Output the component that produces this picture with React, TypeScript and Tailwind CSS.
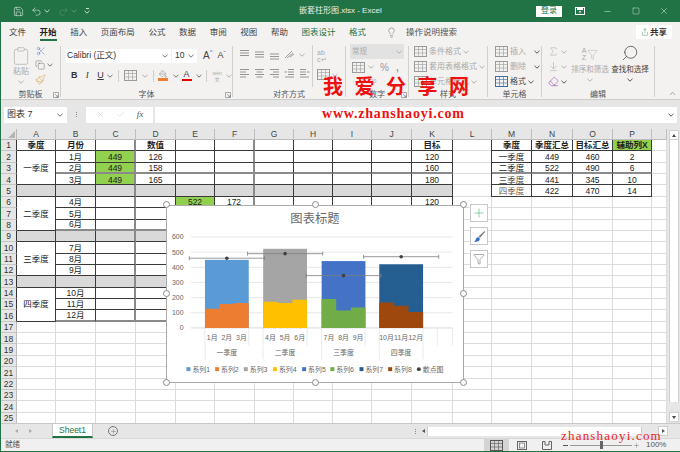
import React from "react";
import { X, Check, Minus, Square, Plus, Filter, Paintbrush, Search, Lightbulb, Share, Scissors, Copy, Clipboard, Save, Undo2, Redo2, Eraser, ChevronUp, Sigma, ArrowDownToLine, PaintBucket } from "lucide-react";

const FONT = "[font-family:'Liberation_Sans','Noto_Sans_CJK_SC',sans-serif]";

const Caret = ({ c = "#666" }: { c?: string }) => (
  <svg width="6" height="4" viewBox="0 0 6 4" className="shrink-0"><path d="M0.5 0.8 L3 3.2 L5.5 0.8" stroke={c} fill="none" strokeWidth="0.9" /></svg>
);

const Lines = ({ l, c = "#8a8a8a" }: { l: number[][]; c?: string }) => (
  <svg width="11" height="11" viewBox="0 0 11 11" className="shrink-0">
    {l.map((a, i) => <line key={i} x1={a[0]} x2={a[1]} y1={a[2]} y2={a[2]} stroke={c} strokeWidth="0.9" />)}
  </svg>
);

const CellIcon = ({ c = "#9a9a9a", fill = "none" }: { c?: string; fill?: string }) => (
  <svg width="13" height="11" viewBox="0 0 13 11" className="shrink-0">
    <rect x="0.5" y="0.5" width="12" height="10" fill={fill} stroke={c} />
    <path d="M0.5 3.5H12.5M0.5 7H12.5M4.5 0.5V10.5M8.5 0.5V10.5" stroke={c} strokeWidth="0.6" />
  </svg>
);

const Launcher = () => (
  <svg width="6" height="6" viewBox="0 0 6 6" className="absolute right-[1px] bottom-[1px]"><path d="M0.5 5.5V0.5H5.5V5.5H0.5M2 2L5 5M5 3V5H3" stroke="#777" fill="none" strokeWidth="0.6" /></svg>
);

function Group({ label, className, children, launcher }: { label: string; className: string; children: React.ReactNode; launcher?: boolean }) {
  return (
    <div className={"relative flex flex-col shrink-0 h-full " + className}>
      <div className="flex-1 min-h-0">{children}</div>
      <div className="h-[9px] flex items-center justify-center text-[8px] text-[#555] leading-none">{label}</div>
      {launcher && <Launcher />}
    </div>
  );
}
const Sep = ({ className = "" }: { className?: string }) => <div className={"w-px self-stretch my-[2px] bg-[#d2d0ce] shrink-0 " + className} />;

const TITLE_TABS = ["文件", "开始", "插入", "页面布局", "公式", "数据", "审阅", "视图", "帮助"];

function TitleBar() {
  return (
    <div className="h-[22px] bg-[#217346] flex items-center text-white shrink-0">
      <div className="w-[12px]" />
      <Save size={11} strokeWidth={1.1} />
      <div className="w-[7px]" />
      <Undo2 size={11} strokeWidth={1.1} />
      <div className="w-[2px]" /><Caret c="#d5e5db" />
      <div className="w-[8px]" />
      <Redo2 size={11} strokeWidth={1.1} className="text-[#5f9a78]" />
      <div className="w-[2px]" /><Caret c="#5f9a78" />
      <div className="w-[7px]" />
      <div className="flex flex-col gap-[1px] items-center"><div className="w-[3px] h-px bg-[#d5e5db]" /><Caret c="#d5e5db" /></div>
      <div className="w-[209px]" />
      <div className="text-[8px] text-[#e8f0eb] w-[237px] whitespace-nowrap">嵌套柱形图.xlsx&nbsp;-&nbsp;Excel</div>
      <div className="w-[26px] h-[11px] bg-white text-[#217346] text-[8px] flex items-center justify-center">登录</div>
      <div className="w-[13px]" />
      <svg width="10" height="8" viewBox="0 0 10 8"><rect x="0.5" y="0.5" width="9" height="7" stroke="white" fill="none" /><rect x="2" y="0.5" width="6" height="2.5" fill="white" /><path d="M5 6.5V4M3.8 5L5 4L6.200 5" stroke="white" fill="none" strokeWidth="0.7" /></svg>
      <div className="w-[18px]" />
      <Minus size={9} strokeWidth={1.2} />
      <div className="w-[20px]" />
      <Square size={8} strokeWidth={1.2} />
      <div className="w-[19px]" />
      <X size={10} strokeWidth={1.1} />
    </div>
  );
}

function TabBar() {
  return (
    <div className="h-[22px] bg-[#f3f2f1] flex items-center shrink-0 pl-[8px] pb-[2px] text-[8.5px] text-[#444] whitespace-nowrap">
      <div className="flex gap-[13.6px] items-center">
        {TITLE_TABS.map((t) => (
          <div key={t} className={"relative " + (t === "开始" ? "font-bold text-[#222]" : "")}>
            {t}
            {t === "开始" && <div className="absolute left-0 right-0 top-[13px] h-[2px] bg-[#217346]" />}
          </div>
        ))}
        <div className="text-[#217346]">图表设计</div>
        <div className="text-[#217346]">格式</div>
      </div>
      <div className="w-[20px]" />
      <Lightbulb size={11} strokeWidth={1} className="text-[#555]" />
      <div className="w-[9px]" />
      <div className="text-[#555]">操作说明搜索</div>
      <div className="flex-1" />
      <div className="mr-[8px] w-[36px] h-[14px] bg-white flex items-center justify-center gap-[1px] font-bold text-[#333]">
        <Share size={8} strokeWidth={1.2} className="text-[#217346]" /> 共享
      </div>
    </div>
  );
}

function Ribbon() {
  const gray = "text-[#aaa]";
  return (
    <div className="h-[56px] bg-[#f3f2f1] flex border-b border-[#cfcdcb] shrink-0 text-[8px] text-[#555] whitespace-nowrap">
      <Group label="剪贴板" className="w-[59px]" launcher>
        <div className="flex pl-[8px] pt-[2px]">
          <div className="w-[24px] flex flex-col items-center">
            <Clipboard size={20} strokeWidth={1} className="text-[#b8b8b8]" />
            <div className={"mt-[1px] text-[8px] leading-[10px] " + gray}>粘贴</div>
            <div className="mt-[3px]"><Caret c="#aaa" /></div>
          </div>
          <div className="flex flex-col pl-[2px] gap-[4px]">
            <Scissors size={10} strokeWidth={1} className="text-[#2b6cb0] ml-[1px]" />
            <div className="flex items-center gap-[2px]"><Copy size={10} strokeWidth={1} className="text-[#555]" /><Caret /></div>
            <Paintbrush size={11} strokeWidth={1.1} className="text-[#d89a2c]" />
          </div>
        </div>
      </Group>
      <Sep />
      <Group label="字体" className="w-[171px]" launcher>
        <div className="pl-[5px] pt-[4px] flex items-center">
          <div className="w-[105px] h-[14px] bg-white flex items-center justify-between px-[1px] pr-[3px] text-[8.5px] text-[#333]">Calibri (正文)<Caret /></div>
          <div className="ml-px w-[25px] h-[14px] bg-white flex items-center justify-between px-[3px] text-[8.5px] text-[#333]">10<Caret /></div>
          <div className="ml-[6px] text-[10px] text-[#444]">A<span className="text-[6px] align-top text-[#2b6cb0]">^</span></div>
          <div className="ml-[5px] text-[9px] text-[#444]">A<span className="text-[6px] align-top text-[#2b6cb0]">ˇ</span></div>
        </div>
        <div className="pl-[7px] pt-[4px] flex items-center text-[9px] text-[#333] h-[21px]">
          <div className="w-[14px] text-center font-bold">B</div>
          <div className="w-[15px] text-center italic font-['Liberation_Serif']">I</div>
          <div className="w-[15px] text-center underline">U</div>
          <Caret />
          <div className="w-px h-[12px] bg-[#d2d0ce] mx-[5px]" />
          <CellIcon />
          <div className="w-[5px]" /><Caret c="#aaa" />
          <div className="w-px h-[12px] bg-[#d2d0ce] mx-[5px]" />
          <div className="flex flex-col items-center w-[11px]">
            <PaintBucket size={8} strokeWidth={1} className="text-[#555]" />
            <div className="w-[10px] h-[2.500px] bg-[#ed7d31]" />
          </div>
          <div className="w-[5px]" /><Caret />
          <div className="w-[3px]" />
          <div className="flex flex-col items-center w-[11px] leading-[8px]">
            <span className="text-[9px] text-[#444]">A</span>
            <div className="w-[10px] h-[2.500px] mt-[1px] bg-[#e60000]" />
          </div>
          <div className="w-[5px]" /><Caret />
          <div className="w-px h-[12px] bg-[#d2d0ce] mx-[4px]" />
          <div className={"text-[5px] leading-[6px] w-[14px] text-center " + gray}>wén<br />文</div>
          <div className="w-[3px]" /><Caret c="#aaa" />
        </div>
      </Group>
      <Sep />
      <Group label="对齐方式" className="w-[112px]">
        <div className="flex h-[44px]">
          <div className="w-[79px] flex flex-col pl-[6px]">
            <div className="flex items-center gap-[4px] pt-[5px]">
              <Lines l={[[1, 10, 1.5], [1, 10, 4], [1, 10, 6.5]]} />
              <Lines l={[[1, 10, 3], [1, 10, 5.5], [1, 10, 8]]} />
              <Lines l={[[1, 10, 5], [1, 10, 7.5], [1, 10, 10]]} />
              <svg width="11" height="11" viewBox="0 0 11 11"><path d="M1 9L8 2M3 9L9 4M6 8L10 5" stroke="#8a8a8a" fill="none" strokeWidth="0.8" /></svg>
              <Caret c="#aaa" />
            </div>
            <div className="flex items-center gap-[4px] pt-[8px]">
              <Lines l={[[1, 10, 1.5], [1, 7, 4], [1, 10, 6.5], [1, 7, 9]]} />
              <Lines l={[[1, 10, 1.5], [2.5, 8.5, 4], [1, 10, 6.5], [2.5, 8.5, 9]]} />
              <Lines l={[[1, 10, 1.5], [4, 10, 4], [1, 10, 6.5], [4, 10, 9]]} />
              <Lines l={[[4, 10, 1.5], [4, 10, 4], [4, 10, 6.5], [1, 10, 9], [0.5, 3, 4]]} />
              <Lines l={[[1, 7, 1.5], [1, 7, 4], [1, 7, 6.5], [1, 10, 9], [8, 10.5, 4]]} />
            </div>
          </div>
          <Sep className="!my-[1px]" />
          <div className="flex-1 flex flex-col pl-[4px]">
            <div className={"pt-[5px] text-[7px] leading-[7px] " + gray}>ab<br />c↵</div>
            <div className="flex items-center gap-[2px] pt-[6px]"><CellIcon /><Caret c="#aaa" /></div>
          </div>
        </div>
      </Group>
      <Sep />
      <Group label="数字" className="w-[62px]" launcher>
        <div className="pl-[4px]">
          <div className="w-[54px] h-[15px] bg-[#e2e2e2] flex items-center justify-between px-[2px] text-[7.5px] text-[#aaa]">常规<Caret c="#aaa" /></div>
          <div className="flex items-center pl-[2px] h-[16px] text-[#999]">
            <CellIcon />
            <div className="w-[3px]" /><Caret c="#aaa" />
            <span className="ml-[6px] text-[10px]">%</span>
            <span className="ml-[7px] text-[10px] font-bold">,</span>
          </div>
          <div className="flex items-center pl-[2px] h-[12px] gap-[5px] text-[6px] text-[#aaa]"><span>←.0</span><span>.00</span></div>
        </div>
      </Group>
      <Sep />
      <Group label="样式" className="w-[78px]">
        <div className="pl-[5px] flex flex-col text-[#aaa] text-[8px]">
          <div className="flex items-center gap-[2px] h-[15px]"><CellIcon />条件格式<Caret c="#aaa" /></div>
          <div className="flex items-center gap-[2px] h-[15px]"><CellIcon />套用表格格式<Caret c="#aaa" /></div>
          <div className="flex items-center gap-[2px] h-[15px]"><CellIcon />单元格样式<Caret c="#aaa" /></div>
        </div>
      </Group>
      <Sep />
      <Group label="单元格" className="w-[53px]">
        <div className="pl-[7px] flex flex-col text-[8px]">
          <div className="flex items-center gap-[2px] h-[15px] text-[#aaa]"><CellIcon /><span className="w-[18px]">插入</span><div className="w-[2px]" /><Caret c="#444" /></div>
          <div className="flex items-center gap-[2px] h-[15px] text-[#aaa]"><CellIcon /><span className="w-[18px]">删除</span><div className="w-[2px]" /><Caret c="#444" /></div>
          <div className="flex items-center gap-[2px] h-[15px] text-[#444]"><CellIcon c="#3a6ea5" /><span>格式</span><Caret c="#444" /></div>
        </div>
      </Group>
      <Sep />
      <Group label="编辑" className="w-[112px]">
        <div className="flex">
          <div className="w-[29px] pl-[6px] flex flex-col text-[#999]">
            <div className="flex items-center gap-[2px] h-[15px]"><Sigma size={11} strokeWidth={1} /><Caret c="#aaa" /></div>
            <div className="flex items-center gap-[2px] h-[15px]"><ArrowDownToLine size={11} strokeWidth={1} /><Caret c="#aaa" /></div>
            <div className="flex items-center gap-[2px] h-[15px]"><Eraser size={11} strokeWidth={1.2} className="text-[#8e44ad]" /><Caret c="#444" /></div>
          </div>
          <div className="w-[38px] flex flex-col items-center text-[#aaa]">
            <div className="h-[19px] flex items-center gap-[1px] pt-[1px] text-[7px] leading-[7px]"><span>A<br />Z</span><Filter size={11} strokeWidth={1} /></div>
            <div className="text-[7.5px] leading-[11px] mt-[1px]">排序和筛选</div>
            <div className="mt-[3px]"><Caret c="#aaa" /></div>
          </div>
          <div className="w-[38px] ml-[2px] flex flex-col items-center text-[#444]">
            <Search size={18} strokeWidth={1} className="-scale-x-100" />
            <div className="text-[7.5px] leading-[11px] mt-[2px]">查找和选择</div>
            <div className="mt-[3px]"><Caret c="#444" /></div>
          </div>
        </div>
      </Group>
      <Sep />
      <div className="flex-1 flex items-end justify-end pr-[3px] pb-[1px]"><ChevronUp size={9} strokeWidth={1.2} className="text-[#444]" /></div>
    </div>
  );
}

function FormulaBar() {
  return (
    <div className="h-[25px] bg-[#e6e6e6] flex items-center shrink-0 pl-[3px] pt-[4px] pr-[3px]">
      <div className="w-[63px] h-[16px] bg-white flex items-center justify-between px-[3px] pr-[4px] text-[9px] text-[#333]">图表 7<Caret /></div>
      <div className="w-[19px] flex flex-col items-center gap-[1px]">
        <div className="w-px h-px bg-[#888]" /><div className="w-px h-px bg-[#888]" /><div className="w-px h-px bg-[#888]" />
      </div>
      <div className="w-[67px] h-[16px] bg-white flex items-center justify-around px-[4px] text-[#b5b5b5]">
        <X size={9} strokeWidth={1} />
        <Check size={9} strokeWidth={1} />
        <span className="font-['Liberation_Serif'] italic text-[9px] text-[#555]">fx</span>
      </div>
      <div className="w-[2px]" />
      <div className="flex-1 h-[16px] bg-white flex items-center justify-end pr-[3px]"><Caret c="#444" /></div>
    </div>
  );
}

const COLS = ["A", "B", "C", "D", "E", "F", "G", "H", "I", "J", "K", "L", "M", "N", "O", "P", "Q"];
const DATA: Record<string, string> = {
  A1: "季度", B1: "月份", D1: "数值", K1: "目标",
  A2: "一季度", A6: "二季度", A10: "三季度", A14: "四季度",
  B2: "1月", B3: "2月", B4: "3月", B6: "4月", B7: "5月", B8: "6月", B10: "7月", B11: "8月", B12: "9月", B14: "10月", B15: "11月", B16: "12月",
  C2: "449", C3: "449", C4: "449", D2: "126", D3: "158", D4: "165", E6: "522", F6: "172",
  K2: "120", K3: "160", K4: "180", K6: "120",
  M1: "季度", N1: "季度汇总", O1: "目标汇总", P1: "辅助列X",
  M2: "一季度", M3: "二季度", M4: "三季度", M5: "四季度",
  N2: "449", N3: "522", N4: "441", N5: "422",
  O2: "460", O3: "490", O4: "345", O5: "470",
  P2: "2", P3: "6", P4: "10", P5: "14",
};
const GREEN = new Set(["C2", "C3", "C4", "E6", "P1"]);
const BOLD = new Set(["A1", "B1", "D1", "K1", "M1", "N1", "O1", "P1"]);
const SPANS: Record<string, boolean> = { A2: true, A6: true, A10: true, A14: true };
const SKIP = new Set(["A3", "A4", "A7", "A8", "A11", "A12", "A15", "A16"]);

function Sheet() {
  const cells: React.ReactNode[] = [];
  cells.push(
    <div key="corner" className="bg-[#e6e6e6] border-r border-b border-[#b8b8b8] flex items-end justify-end">
      <div className="w-0 h-0 border-l-[7px] border-l-transparent border-b-[7px] border-b-[#b5b5b5] mr-[1px] mb-[1px]" />
    </div>
  );
  COLS.forEach((c) => {
    cells.push(
      <div key={c} className="bg-[#e6e6e6] border-r border-b border-[#bdbdbd] flex items-center justify-center text-[8.5px] text-[#444] leading-none">{c === "Q" ? "" : c}</div>
    );
  });
  for (let r = 1; r <= 25; r++) {
    const hdrDark = r <= 16;
    cells.push(
      <div key={"r" + r} className={"bg-[#e6e6e6] border-b border-[#c6c6c6] flex items-center justify-center pt-px text-[8.5px] text-[#333] leading-none border-r " + (hdrDark ? "border-r-[#333]" : "border-r-[#bdbdbd]")}>{r}</div>
    );
    COLS.forEach((c, ci) => {
      const id = c + r;
      if (SKIP.has(id)) return;
      const inLeft = ci <= 10 && r <= 16;
      const inRight = ci >= 12 && ci <= 15 && r <= 5;
      const dark = inLeft || inRight;
      const sep = inLeft && (r === 5 || r === 9 || r === 13);
      const txt = DATA[id];
      let cls = "flex items-center justify-center pt-px leading-none overflow-hidden text-[8.5px] ";
      if (SPANS[id]) cls += "row-span-3 ";
      cls += dark ? "border-r border-b border-[#3a3a3a] " : "border-r border-b border-[#dcdcdc] ";
      if (inLeft && (c === "C" || c === "F")) cls += "border-r-2 border-r-[#8a8a8a] ";
      if (dark && (r === 3 || r === 8 || r === 16)) cls += "border-b-2 border-b-[#8a8a8a] ";
      if (ci === 12 && inRight) cls += "shadow-[-1px_0_0_#3a3a3a] ";
      if (GREEN.has(id)) cls += "bg-[#92d050] ";
      else if (sep) cls += "bg-[#d9d9d9] ";
      else cls += "bg-white ";
      if (BOLD.has(id)) cls += "font-bold ";
      cls += c === "M" && r === 5 ? "text-[#7b5a3c] " : c === "M" && r === 4 ? "text-[#444] " : "text-[#222] ";
      cells.push(<div key={id} className={cls}>{txt}</div>);
    });
  }
  return (
    <div className="h-[298px] bg-[#e6e6e6] flex shrink-0 overflow-hidden pt-[4px]">
      <div className="grid grid-cols-[16px_39px_40px_40px_40px_39px_40px_39px_39px_39px_40px_41px_39px_40px_41px_40px_39px_15px] grid-rows-[11px_repeat(25,11.36px)] whitespace-nowrap">
        {cells}
      </div>
      <div className="flex-1 flex flex-col items-center pt-[1px] pb-[1px]">
        <div className="w-[10px] h-[10px] bg-white border border-[#cfcfcf] flex items-center justify-center"><div className="w-0 h-0 border-x-[2.500px] border-x-transparent border-b-[3px] border-b-[#444]" /></div>
        <div className="w-[10px] h-[262px] bg-white border-x border-[#cfcfcf]" />
        <div className="flex-1" />
        <div className="w-[10px] h-[10px] bg-white border border-[#cfcfcf] flex items-center justify-center"><div className="w-0 h-0 border-x-[2.500px] border-x-transparent border-t-[3px] border-t-[#444]" /></div>
      </div>
    </div>
  );
}

function SheetTabs() {
  return (
    <div className="h-[15px] bg-[#e6e6e6] flex items-center shrink-0 border-t border-[#c8c8c8] text-[#aaa]">
      <div className="w-[14px]" />
      <div className="w-0 h-0 border-y-[2px] border-y-transparent border-r-[3px] border-r-[#aaa]" />
      <div className="w-[11px]" />
      <div className="w-0 h-0 border-y-[2px] border-y-transparent border-l-[3px] border-l-[#aaa]" />
      <div className="w-[20px]" />
      <div className="w-[41px] h-[14px] bg-white border-x border-b-2 border-x-[#c8c8c8] border-b-[#217346] text-[#217346] text-[8.500px] flex items-center justify-center">Sheet1</div>
      <div className="w-[15px]" />
      <div className="w-[10px] h-[10px] rounded-full border border-[#777] flex items-center justify-center text-[#555]"><Plus size={7} strokeWidth={1.2} /></div>
      <div className="w-[297px]" />
      <div className="flex flex-col gap-[1px]"><div className="w-px h-px bg-[#888]" /><div className="w-px h-px bg-[#888]" /><div className="w-px h-px bg-[#888]" /></div>
      <div className="w-[8px] h-[10px] ml-[3px] flex items-center justify-center"><div className="w-0 h-0 border-y-[2.500px] border-y-transparent border-r-[3px] border-r-[#555]" /></div>
      <div className="w-[215px] h-[9px] bg-white border-x border-[#cfcfcf]" />
      <div className="w-[16px]" />
      <div className="w-[10px] h-[10px] bg-white border border-[#cfcfcf] flex items-center justify-center"><div className="w-0 h-0 border-y-[2.500px] border-y-transparent border-l-[3px] border-l-[#555]" /></div>
    </div>
  );
}

function StatusBar() {
  return (
    <div className="h-[13px] bg-[#f0f0f0] flex items-center shrink-0 border-t border-[#d8d8d8] text-[7.5px] text-[#555]">
      <div className="w-[20px] pl-[4px]">就绪</div>
      <div className="w-[463px]" />
      <div className="w-[25px] h-full bg-[#d4d4d4] flex items-center justify-center"><CellIcon c="#555" /></div>
      <div className="w-[25px] flex items-center justify-center"><svg width="10" height="9" viewBox="0 0 10 9"><rect x="0.5" y="0.5" width="9" height="8" fill="none" stroke="#666" /><rect x="2.500" y="2" width="5" height="5" fill="none" stroke="#666" strokeWidth="0.7" /></svg></div>
      <div className="w-[25px] flex items-center justify-center"><svg width="10" height="9" viewBox="0 0 10 9"><path d="M0.500 8.500V0.500H3V4H7V0.500H9.500V8.500Z" fill="none" stroke="#666" /></svg></div>
      <div className="w-[4px]" />
      <div className="w-[5px] h-px bg-[#555]" />
      <div className="w-[2px]" />
      <div className="w-[62px] h-px bg-[#999] flex items-center justify-center"><div className="w-[3px] h-[8px] bg-[#666]" /></div>
      <div className="w-[9px] h-full flex items-center justify-center"><Plus size={7} strokeWidth={1.2} /></div>
      <div className="w-[5px]" />
      <div className="text-[8px] whitespace-nowrap">100%</div>
    </div>
  );
}

const Y = (v: number) => 328.3 - v * 0.1533;
const QUARTERS = [
  { x: 203.7, top: 449, back: "#5b9bd5", front: "#ed7d31", v: [126, 158, 165], t: 460, m: ["1月", "2月", "3月"], q: "一季度" },
  { x: 262.6, top: 522, back: "#a5a5a5", front: "#ffc000", v: [172, 165, 185], t: 490, m: ["4月", "5月", "6月"], q: "二季度" },
  { x: 321.7, top: 441, back: "#4472c4", front: "#70ad47", v: [190, 115, 135], t: 345, m: ["7月", "8月", "9月"], q: "三季度" },
  { x: 380, top: 420, back: "#255e91", front: "#9e480e", v: [167, 147, 105], t: 470, m: ["10月", "11月", "12月"], q: "四季度" },
];
const LEG = [
  ["系列1", "#5b9bd5", 185], ["系列2", "#ed7d31", 214], ["系列3", "#a5a5a5", 243], ["系列4", "#ffc000", 272.500],
  ["系列5", "#4472c4", 302], ["系列6", "#70ad47", 330.500], ["系列7", "#255e91", 360], ["系列8", "#9e480e", 389],
] as [string, string, number][];

function ChartSvg() {
  const W = 44.3;
  const sw = W / 3;
  const tf = { fontFamily: "'Liberation Sans','Noto Sans CJK SC',sans-serif" };
  return (
    <svg viewBox="166 205 298 178" className="w-full h-full block">
      <text x="315" y="222" textAnchor="middle" fontSize="12.500" fill="#6a6a6a" style={tf}>图表标题</text>
      {[100, 200, 300, 400, 500, 600].map((v) => (
        <line key={v} x1="189.3" x2="454" y1={Y(v)} y2={Y(v)} stroke="#e4e4e4" strokeWidth="0.9" />
      ))}
      {[0, 100, 200, 300, 400, 500, 600].map((v) => (
        <text key={v} x="182" y={Y(v) + 2.500} textAnchor="end" fontSize="7" fill="#666" style={tf}>{v}</text>
      ))}
      <line x1="189.3" x2="454" y1="328.3" y2="328.3" stroke="#d9d9d9" />
      {[203.7, 248, 262.4, 307, 321.7, 365.7, 380, 424.3, 438.7, 454].map((x) => (
        <line key={x} x1={x} x2={x} y1="328.3" y2="346" stroke="#e4e4e4" strokeWidth="0.8" />
      ))}
      {[204, 262.4, 321.7, 380, 424.300].map((x) => (
        <line key={x} x1={x} x2={x} y1="347" y2="360" stroke="#e4e4e4" strokeWidth="0.8" />
      ))}
      {QUARTERS.map((q) => {
        const d = `M${q.x} 328.3V${Y(q.v[0])}H${q.x + sw}V${Y(q.v[1])}H${q.x + 2 * sw}V${Y(q.v[2])}H${q.x + W}V328.3Z`;
        return (
          <g key={q.q}>
            <rect x={q.x} y={Y(q.top)} width={W} height={328.3 - Y(q.top)} fill={q.back} />
            <path d={d} fill={q.front} />
            {q.m.map((m, i) => (
              <text key={m} x={q.x + sw * (i + 0.5)} y="340.500" textAnchor="middle" fontSize="7" fill="#666" style={tf}>{m}</text>
            ))}
            <text x={q.x + W / 2} y="356" textAnchor="middle" fontSize="7" fill="#666" style={tf}>{q.q}</text>
          </g>
        );
      })}
      {QUARTERS.map((q, i) => {
        const cx = q.x + W / 2;
        const y = Y(q.t);
        const half = 38;
        return (
          <g key={i} stroke="#7f7f7f" strokeWidth="0.8">
            <line x1={cx - half} x2={cx + half} y1={y} y2={y} />
            <line x1={cx - half} x2={cx - half} y1={y - 2} y2={y + 2} />
            <line x1={cx + half} x2={cx + half} y1={y - 2} y2={y + 2} />
            <circle cx={cx} cy={y} r="1.800" fill="#404040" stroke="none" />
          </g>
        );
      })}
      {LEG.map(([t, c, x]) => (
        <g key={t}>
          <rect x={x} y="368" width="4" height="4" fill={c} />
          <text x={x + 6} y="372.800" fontSize="7" fill="#666" style={tf}>{t}</text>
        </g>
      ))}
      <circle cx="420" cy="370" r="2" fill="#404040" />
      <text x="424" y="372.800" fontSize="7" fill="#666" style={tf}>散点图</text>
    </svg>
  );
}

const Handle = ({ className }: { className: string }) => (
  <div className={"absolute w-[7px] h-[7px] rounded-full bg-white border border-[#8a8a8a] " + className} />
);
const SideBtn = ({ className, children }: { className: string; children: React.ReactNode }) => (
  <div className={"absolute left-[469px] w-[18px] h-[18px] bg-white border border-[#c8c8c8] flex items-center justify-center " + className}>{children}</div>
);

export default function App() {
  return (
    <div className={"relative w-[680px] h-[452px] overflow-hidden flex flex-col bg-white border-l border-b border-[#217346] " + FONT}>
      <TitleBar />
      <TabBar />
      <Ribbon />
      <FormulaBar />
      <Sheet />
      <SheetTabs />
      <StatusBar />

      {/* chart overlay */}
      <div className="absolute left-[165px] top-[205px] w-[298px] h-[178px] bg-white border border-[#aaaaaa]"><ChartSvg /></div>
      <Handle className="left-[162px] top-[201px]" />
      <Handle className="left-[311px] top-[201px]" />
      <Handle className="left-[459px] top-[201px]" />
      <Handle className="left-[162px] top-[290px]" />
      <Handle className="left-[459px] top-[290px]" />
      <Handle className="left-[162px] top-[379px]" />
      <Handle className="left-[311px] top-[379px]" />
      <Handle className="left-[459px] top-[379px]" />
      <SideBtn className="top-[204px]"><Plus size={14} strokeWidth={1} className="text-[#4cae6e]" /></SideBtn>
      <SideBtn className="top-[227px]">
        <svg width="13" height="13" viewBox="0 0 13 13">
          <path d="M5.500 6.500L11.500 1L12.300 1.800L7 7.800Z" fill="#7a7a7a" />
          <path d="M1 12C2.500 11.500 2.500 9 3.500 8C4.300 7.200 5.800 7 6.500 8C7.200 9 6.500 10.500 5.500 11C4 11.800 2.500 12.200 1 12Z" fill="#2f6fbf" />
        </svg>
      </SideBtn>
      <SideBtn className="top-[250px]"><Filter size={12} strokeWidth={1} className="text-[#555]" /></SideBtn>

      {/* watermarks */}
      <div className="absolute left-[322px] top-[74px] text-[20px] leading-[26px] font-bold text-[#ee1111] tracking-[11.500px] whitespace-nowrap">我爱分享网</div>
      <div className="absolute left-[321px] top-[105px] font-['Liberation_Serif'] text-[14px] leading-[18px] font-bold text-[#ee1111] tracking-[0.800px] whitespace-nowrap">www.zhanshaoyi.com</div>
      <div className="absolute left-[560px] top-[429px] font-['Liberation_Serif'] text-[13px] leading-[14px] text-[#ee2222] tracking-[1.200px] whitespace-nowrap">zhanshaoyi.com</div>
    </div>
  );
}
